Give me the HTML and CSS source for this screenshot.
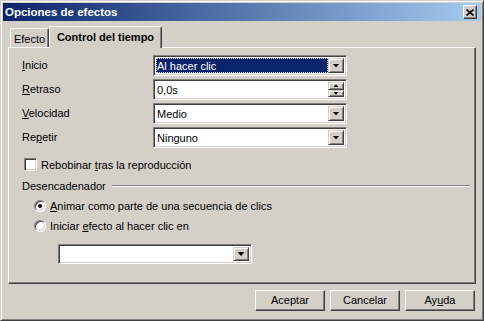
FILE: index.html
```html
<!DOCTYPE html>
<html>
<head>
  <meta http-equiv="Content-type" content="text/html; charset=utf-8">
  <link rel="stylesheet" href="styles.css">
</head>
<body>
<div class="window">
  <div class="titlebar">
    <span class="title">Opciones de efectos</span>
    <div class="close">
      <svg width="8" height="7" viewBox="0 0 8 7"><path d="M0.5 0.5 L7.5 6.5 M7.5 0.5 L0.5 6.5" stroke="#000" stroke-width="1.6" fill="none"/></svg>
    </div>
  </div>

  <div class="body">
    <div class="tabs">
      <div class="tab">Efecto</div>
      <div class="tab active">Control del tiempo</div>
    </div>

    <div class="panel">
      <div class="form">
        <label><u>I</u>nicio</label>
        <div class="combo">
          <div class="value focus">Al hacer clic</div>
          <div class="dropbtn"><i class="arrow"></i></div>
        </div>

        <label><u>R</u>etraso</label>
        <div class="combo">
          <div class="value">0,0s</div>
          <div class="spin">
            <div class="spinbtn"><i class="tri up"></i></div>
            <div class="spinbtn"><i class="tri"></i></div>
          </div>
        </div>

        <label><u>V</u>elocidad</label>
        <div class="combo">
          <div class="value">Medio</div>
          <div class="dropbtn"><i class="arrow"></i></div>
        </div>

        <label>Re<u>p</u>etir</label>
        <div class="combo">
          <div class="value">Ninguno</div>
          <div class="dropbtn"><i class="arrow"></i></div>
        </div>
      </div>

      <div class="check">
        <span class="box"></span>
        <span>Rebobinar <u>t</u>ras la reproducción</span>
      </div>

      <div class="group-head">
        <span>Desencadenador</span>
        <div class="rule"></div>
      </div>

      <div class="radios">
        <div class="radio">
          <span class="dot checked"></span>
          <span><u>A</u>nimar como parte de una secuencia de clics</span>
        </div>
        <div class="radio">
          <span class="dot"></span>
          <span>Iniciar <u>e</u>fecto al hacer clic en</span>
        </div>
      </div>

      <div class="combo trigger">
        <div class="value"></div>
        <div class="dropbtn"><i class="arrow"></i></div>
      </div>
    </div>

    <div class="buttons">
      <div class="btn">Aceptar</div>
      <div class="btn">Cancelar</div>
      <div class="btn">Ay<u>u</u>da</div>
    </div>
  </div>
</div>
</body>
</html>
```

FILE: styles.css
```css
body {
    margin: 0;
    font: 11px "Liberation Sans", Tahoma, sans-serif;
    color: #000;
}

.window {
    width: 484px;
    height: 321px;
    box-sizing: border-box;
    background: #d4d0c8;
    border: 1px solid;
    border-color: #d4d0c8 #404040 #404040 #d4d0c8;
    box-shadow: inset 1px 1px #fff, inset -1px -1px #808080;
    padding: 2px;
    display: flex;
    flex-direction: column;
}

.titlebar {
    height: 18px;
    display: flex;
    align-items: center;
    padding: 0 4px 0 2px;
    background: linear-gradient(to right, #0a246a, #a6caf0);
}
.title {
    flex: 1;
    color: #fff;
    font-weight: bold;
    font-size: 11.5px;
}
.close {
    width: 14px;
    height: 14px;
    box-sizing: border-box;
    background: #d4d0c8;
    border: 1px solid;
    border-color: #fff #404040 #404040 #fff;
    box-shadow: inset -1px -1px #808080;
    display: flex;
    align-items: center;
    justify-content: center;
    padding-right: 1px;
}
.close svg { display: block; }

.body {
    flex: 1;
    padding: 5px 5px 0 5px;
}

/* tabs */
.tabs {
    height: 21px;
    display: flex;
    align-items: flex-end;
    padding-left: 2px;
}
.tab {
    box-sizing: border-box;
    height: 19px;
    width: 39px;
    border: 1px solid;
    border-bottom: 0;
    border-color: #fff #404040 #fff #fff;
    box-shadow: inset -1px 0 #808080;
    border-radius: 2px 2px 0 0;
    text-align: center;
    padding-top: 4px;
}
.tab.active {
    position: relative;
    z-index: 1;
    width: 113px;
    height: 22px;
    margin-bottom: -1px;
    background: #d4d0c8;
    font-weight: bold;
    padding-top: 4px;
}

/* panel */
.panel {
    box-sizing: border-box;
    height: 237px;
    border: 1px solid;
    border-color: #fff #404040 #404040 #fff;
    box-shadow: inset -1px -1px #808080;
    padding: 7px 5px 0 13px;
}

.form {
    display: grid;
    grid-template-columns: 131px 194px;
    grid-auto-rows: 21px;
    row-gap: 3px;
}
.form label {
    align-self: center;
    padding-bottom: 1px;
}

.combo {
    box-sizing: border-box;
    height: 21px;
    display: flex;
    background: #fff;
    border: 1px solid;
    border-color: #808080 #fff #fff #808080;
    box-shadow: inset 1px 1px #404040, inset -1px -1px #d4d0c8;
    padding: 2px;
}
.combo .value {
    flex: 1;
    line-height: 17px;
    padding-left: 1px;
    white-space: nowrap;
}
.combo .value.focus {
    background: #0a246a;
    color: #fff;
    outline: 1px dotted #e0e0e0;
    outline-offset: -1px;
}

.dropbtn,
.spinbtn {
    box-sizing: border-box;
    width: 16px;
    background: #d4d0c8;
    border: 1px solid;
    border-color: #d4d0c8 #404040 #404040 #d4d0c8;
    box-shadow: inset 1px 1px #fff, inset -1px -1px #808080;
    display: flex;
    align-items: center;
    justify-content: center;
}
.arrow {
    display: block;
    width: 7px;
    height: 4px;
    background: #000;
    clip-path: polygon(0 0, 100% 0, 50% 100%);
}

.spin {
    display: flex;
    flex-direction: column;
}
.spinbtn {
    flex: 1;
}
.tri {
    display: block;
    width: 5px;
    height: 3px;
    background: #000;
    clip-path: polygon(0 0, 100% 0, 50% 100%);
}
.tri.up {
    clip-path: polygon(50% 0, 100% 100%, 0 100%);
}

/* checkbox */
.check {
    display: flex;
    align-items: center;
    gap: 4px;
    margin: 10px 0 0 2px;
    height: 13px;
}
.box {
    box-sizing: border-box;
    width: 13px;
    height: 13px;
    background: #fff;
    border: 1px solid;
    border-color: #808080 #fff #fff #808080;
    box-shadow: inset 1px 1px #404040, inset -1px -1px #d4d0c8;
}

/* group */
.group-head {
    display: flex;
    align-items: center;
    height: 14px;
    margin-top: 8px;
}
.rule {
    flex: 1;
    margin-left: 6px;
    border-top: 1px solid #808080;
    border-bottom: 1px solid #fff;
}

.radios {
    margin: 3px 0 0 12px;
}
.radio {
    display: flex;
    align-items: center;
    gap: 4px;
    height: 20px;
}
.dot {
    box-sizing: border-box;
    width: 12px;
    height: 12px;
    border-radius: 50%;
    background: #fff;
    border: 1px solid;
    border-color: #808080 #fff #fff #808080;
    box-shadow: inset 1px 1px #404040, inset -1px -1px #d4d0c8;
    display: flex;
    align-items: center;
    justify-content: center;
}
.dot.checked::after {
    content: "";
    width: 4px;
    height: 4px;
    border-radius: 50%;
    background: #000;
}

.combo.trigger {
    width: 194px;
    height: 20px;
    margin: 8px 0 0 36px;
}

/* buttons */
.buttons {
    display: flex;
    justify-content: flex-end;
    gap: 5px;
    margin-top: 6px;
    padding-right: 1px;
}
.btn {
    box-sizing: border-box;
    width: 70px;
    height: 21px;
    border: 1px solid;
    border-color: #fff #404040 #404040 #fff;
    box-shadow: inset -1px -1px #808080;
    text-align: center;
    line-height: 18px;
}
```
